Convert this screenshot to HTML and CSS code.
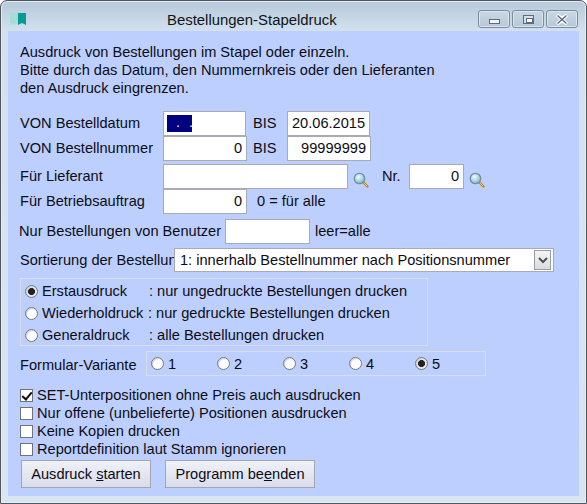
FILE: index.html
```html
<!DOCTYPE html>
<html lang="de">
<head>
  <meta charset="UTF-8">
  <title>Bestellungen-Stapeldruck</title>
  <link rel="stylesheet" href="styles.css">
</head>
<body>
  <div class="window">
    <header class="titlebar">
      <svg class="app-icon" width="16" height="12" viewBox="0 0 16 12">
        <path d="M0 0h8v12l-2-2-2 2-2-2-2 2z" fill="#a6dcd8"/>
        <path d="M8 0h8v12l-4-2-4 2z" fill="#079a94"/>
      </svg>
      <span class="title">Bestellungen-Stapeldruck</span>
      <div class="win-buttons">
        <button class="win-btn"><span class="min-glyph"></span></button>
        <button class="win-btn"><span class="max-glyph"></span></button>
        <button class="win-btn">
          <svg width="14" height="11" viewBox="0 0 14 11">
            <path d="M2 1l5 3.5L12 1M2 10l5-3.5L12 10M2 1l10 9M12 1L2 10" fill="none" stroke="#fff" stroke-width="3.4"/>
            <path d="M2.5 1.5l9 8M11.5 1.5l-9 8" fill="none" stroke="#5d6a78" stroke-width="1.4"/>
          </svg>
        </button>
      </div>
    </header>

    <main class="client">
      <p class="intro">Ausdruck von Bestellungen im Stapel oder einzeln.<br>Bitte durch das Datum, den Nummernkreis oder den Lieferanten<br>den Ausdruck eingrenzen.</p>

      <div class="row row-date">
        <label class="label">VON Bestelldatum</label>
        <div class="field field-date"><span class="selected">. .</span></div>
        <span class="bis">BIS</span>
        <input class="field field-to" value="20.06.2015">
      </div>
      <div class="row row-number">
        <label class="label">VON Bestellnummer</label>
        <input class="field field-num num" value="0">
        <span class="bis">BIS</span>
        <input class="field field-num-to num" value="99999999">
      </div>
      <div class="row row-supplier">
        <label class="label">Für Lieferant</label>
        <input class="field field-supplier">
        <svg class="lens" width="16" height="16" viewBox="0 0 16 16">
          <use href="#lens"/>
        </svg>
        <span class="nr">Nr.</span>
        <input class="field field-nr num" value="0">
        <svg class="lens" width="16" height="16" viewBox="0 0 16 16">
          <use href="#lens"/>
        </svg>
      </div>
      <div class="row row-job">
        <label class="label">Für Betriebsauftrag</label>
        <input class="field field-num num" value="0">
        <span class="hint">0 = für alle</span>
      </div>
      <div class="row row-user">
        <label class="label-user">Nur Bestellungen von Benutzer</label>
        <input class="field field-user">
        <span class="hint-user">leer=alle</span>
      </div>
      <div class="row row-sort">
        <label class="label-sort">Sortierung der Bestellungen</label>
        <div class="select">
          <span>1: innerhalb Bestellnummer nach Positionsnummer</span>
          <span class="select-btn">
            <svg width="10" height="7" viewBox="0 0 10 7">
              <path d="M1 1l4 4 4-4" fill="none" stroke="#4a4f57" stroke-width="2"/>
            </svg>
          </span>
        </div>
      </div>

      <div class="group group-mode">
        <div class="mode"><input type="radio" name="mode" checked><span class="mode-name">Erstausdruck</span><span>: nur ungedruckte Bestellungen drucken</span></div>
        <div class="mode"><input type="radio" name="mode"><span class="mode-name">Wiederholdruck</span><span class="tight">: nur gedruckte Bestellungen drucken</span></div>
        <div class="mode"><input type="radio" name="mode"><span class="mode-name">Generaldruck</span><span>: alle Bestellungen drucken</span></div>
      </div>

      <div class="row row-variant">
        <label class="label-variant">Formular-Variante</label>
        <div class="group group-variant">
          <div class="variant"><input type="radio" name="variant"><span>1</span></div>
          <div class="variant"><input type="radio" name="variant"><span>2</span></div>
          <div class="variant"><input type="radio" name="variant"><span>3</span></div>
          <div class="variant"><input type="radio" name="variant"><span>4</span></div>
          <div class="variant"><input type="radio" name="variant" checked><span>5</span></div>
        </div>
      </div>

      <div class="checks">
        <div class="check"><input type="checkbox" checked><span>SET-Unterpositionen ohne Preis auch ausdrucken</span></div>
        <div class="check"><input type="checkbox"><span>Nur offene (unbelieferte) Positionen ausdrucken</span></div>
        <div class="check"><input type="checkbox"><span>Keine Kopien drucken</span></div>
        <div class="check"><input type="checkbox"><span>Reportdefinition laut Stamm ignorieren</span></div>
      </div>

      <div class="actions">
        <button class="btn btn-start">Ausdruck <u>s</u>tarten</button>
        <button class="btn btn-end">Programm be<u>e</u>nden</button>
      </div>
    </main>
  </div>

  <svg width="0" height="0" class="defs">
    <defs>
      <radialGradient id="glass" cx="0.4" cy="0.35" r="0.7">
        <stop offset="0" stop-color="#f2fbff"/>
        <stop offset="1" stop-color="#7fb2c6"/>
      </radialGradient>
      <g id="lens">
        <path d="M9.5 9.5l5 5" stroke="#b8862a" stroke-width="2.4" stroke-linecap="round"/>
        <path d="M10.5 10.5l3.5 3.5" stroke="#f2c64a" stroke-width="1"/>
        <circle cx="6.5" cy="6.5" r="5.2" fill="url(#glass)" stroke="#6e8f9e" stroke-width="1.3"/>
      </g>
    </defs>
  </svg>
</body>
</html>
```

FILE: styles.css
```css
* {
  box-sizing: border-box;
}
html, body {
  margin: 0;
  height: 100%;
  background: #fff;
}
body {
  font-family: "Liberation Sans", Arial, sans-serif;
  font-size: 14.6px;
  color: #0c0c14;
  overflow: hidden;
}
.defs {
  position: absolute;
}
.window {
  width: 587px;
  height: 504px;
  border: 1px solid #50565c;
  border-radius: 7px 7px 0 0;
  background: linear-gradient(#b6c9da 0, #d3e1ef 31px, #d9e6f2 100%);
  box-shadow: inset 0 0 0 1px #e4edf5;
}

/* Title bar */
.titlebar {
  height: 30px;
  padding-left: 9px;
  display: flex;
  align-items: flex-start;
}
.app-icon {
  margin-top: 12px;
}
.title {
  margin: 10px 0 0 141px;
  font-size: 14.9px;
  line-height: 18px;
  color: #10141a;
}
.win-buttons {
  margin: 9px 0 0 auto;
  padding-right: 8px;
  display: flex;
  gap: 2px;
}
.win-btn {
  width: 32px;
  height: 18px;
  padding: 0;
  border: 1px solid #7d8b99;
  border-radius: 3px;
  background: linear-gradient(#c9d7e4, #b6c8d9);
  box-shadow: inset 0 0 0 1px #dbe6f0;
  display: flex;
  align-items: center;
  justify-content: center;
}
.min-glyph {
  width: 11px;
  height: 5px;
  margin-top: 4px;
  border: 1px solid #5d6a78;
  background: #f2f5f8;
}
.max-glyph {
  width: 11px;
  height: 9px;
  border: 1px solid #5d6a78;
  background: #d6e0ea;
  box-shadow: inset 0 0 0 1px #d6e0ea;
  position: relative;
}
.max-glyph::after {
  content: '';
  position: absolute;
  left: 2px;
  top: 2px;
  width: 5px;
  height: 3px;
  border: 1px solid #5d6a78;
  background: #fff;
}

/* Client area */
.client {
  height: 465px;
  margin: 0 7px;
  padding-top: 12px;
  background: #bccfff;
}
.intro {
  margin: 0 0 0 12px;
  line-height: 18px;
}
.row {
  display: flex;
  align-items: center;
  height: 25px;
  white-space: nowrap;
}
/* text in the form rows sits 1px above the middle */
.label, .bis, .nr, .hint, .label-user, .hint-user {
  margin-bottom: 2px;
}
.label {
  width: 143px;
  margin-left: 12px;
}
.field {
  height: 25px;
  padding: 0 4px 2px;
  border: 1px solid #a9abb2;
  background: #fff;
  font: inherit;
  color: inherit;
  outline: none;
  display: block;
}
.num {
  text-align: right;
}
.bis {
  width: 34px;
  padding-left: 7px;
}
.row-date {
  margin-top: 14px;
}
.field-date {
  width: 83px;
  padding: 3px 0 0 3px;
}
.field-to {
  width: 83px;
}
.field-num {
  width: 84px;
}
.field-num-to {
  width: 84px;
}
.row-date .bis {
  width: 41px;
}
.row-number .bis {
  width: 40px;
  padding-left: 6px;
}
.selected {
  display: block;
  width: 25px;
  height: 17px;
  padding-left: 9px;
  background: #000080;
  color: #ffd9b0;
  line-height: 15px;
  overflow: hidden;
  word-spacing: 5px;
}
.row-supplier {
  margin-top: 3px;
}
.field-supplier {
  width: 185px;
}
.lens {
  margin: 6px 0 0 5px;
}
.nr {
  margin-left: 13px;
  width: 27px;
}
.field-nr {
  width: 55px;
}
.hint {
  margin-left: 10px;
}
.row-user {
  margin-top: 5px;
}
.label-user {
  width: 206px;
  margin-left: 11px;
}
.field-user {
  width: 85px;
}
.hint-user {
  margin-left: 5px;
}
.row-sort {
  margin-top: 4px;
  height: 24px;
}
.label-sort {
  width: 154px;
  margin-left: 12px;
  overflow: hidden;
}
.select {
  width: 380px;
  height: 24px;
  padding: 0 2px 0 5px;
  border: 1px solid #a9abb2;
  background: #fff;
  display: flex;
  align-items: center;
  justify-content: space-between;
}
.select-btn {
  width: 17px;
  height: 20px;
  border: 1px solid #9a9da4;
  background: linear-gradient(#f4f4f4, #dcdcdc);
  display: flex;
  align-items: center;
  justify-content: center;
}

/* Groups */
.group {
  border: 1px solid #d7deea;
}
.group-mode {
  width: 408px;
  height: 68px;
  margin: 6px 0 0 12px;
  padding: 1px 0 0 4px;
}
.mode {
  height: 22px;
  display: flex;
  align-items: center;
  white-space: nowrap;
}
.mode-name {
  width: 107px;
  margin-left: 4px;
}
.tight {
  margin-left: -1px;
}
input[type=radio] {
  appearance: none;
  flex: none;
  width: 13px;
  height: 13px;
  margin: 0;
  border: 1px solid #75797f;
  border-radius: 50%;
  background: #fff;
  box-shadow: inset 1px 1px 1px #cfd2d8;
}
input[type=radio]:checked {
  background: radial-gradient(circle, #222 0, #222 3.2px, #e8e8ee 3.8px);
}
.row-variant {
  margin-top: 5px;
}
.label-variant {
  width: 126px;
  margin: 3px 0 0 12px;
}
.group-variant {
  width: 340px;
  height: 25px;
  padding-left: 4px;
  display: flex;
  align-items: center;
}
.variant {
  width: 66px;
  display: flex;
  align-items: center;
  gap: 4px;
}

/* Check boxes */
.checks {
  margin: 10px 0 0 12px;
}
.check {
  height: 18px;
  display: flex;
  align-items: center;
  gap: 4px;
  white-space: nowrap;
}
input[type=checkbox] {
  appearance: none;
  flex: none;
  width: 13px;
  height: 13px;
  margin: 0;
  border: 1px solid #6f7379;
  background: #fff;
  position: relative;
}
input[type=checkbox]:checked::after {
  content: '';
  position: absolute;
  left: 3px;
  top: 0;
  width: 4px;
  height: 8px;
  border: solid #111;
  border-width: 0 2px 2px 0;
  transform: rotate(40deg);
}

/* Buttons */
.actions {
  margin: 2px 0 0 13px;
  display: flex;
  gap: 14px;
}
.btn {
  height: 28px;
  padding: 0;
  border: 1px solid #a3a6ad;
  background: linear-gradient(#eff1f8, #d9ddea);
  font: inherit;
  color: inherit;
}
.btn-start {
  width: 130px;
}
.btn-end {
  width: 150px;
}
```
